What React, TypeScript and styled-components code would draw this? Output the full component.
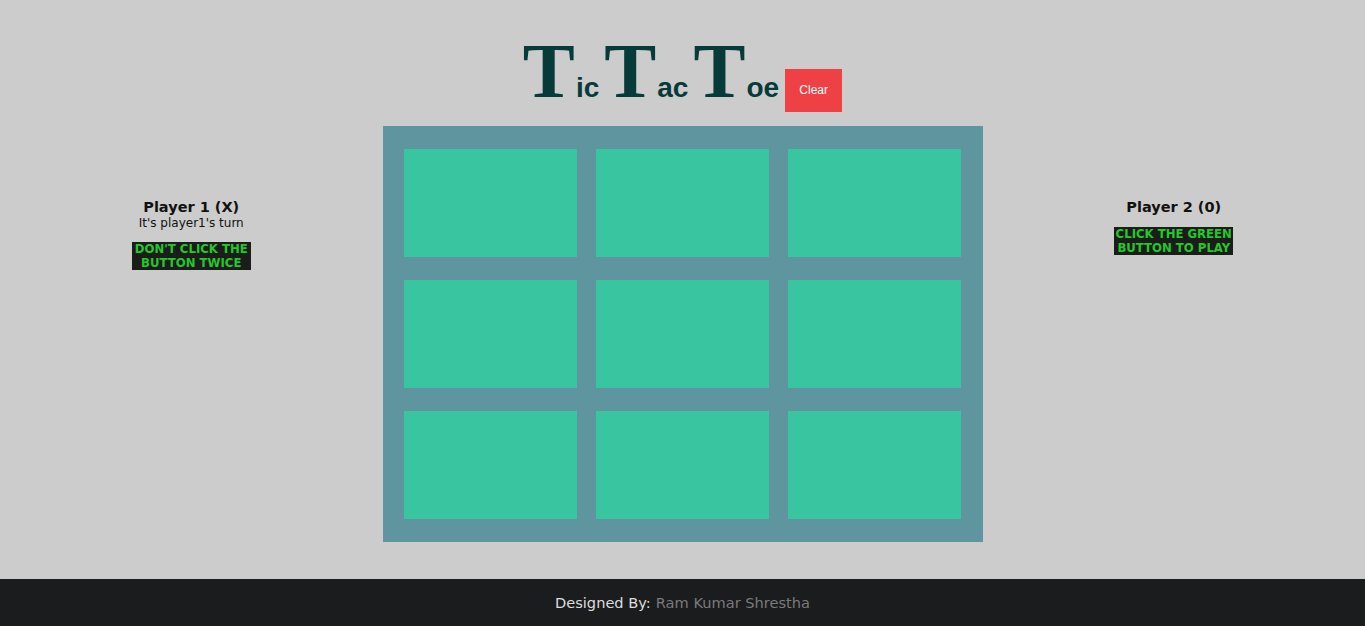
import React from "react";
import styled, { createGlobalStyle } from "styled-components";

const Global = createGlobalStyle`
  html, body { margin: 0; padding: 0; background: #cccccc; }
  body { font-family: "DejaVu Sans", Verdana, sans-serif; }
`;

const Page = styled.div`
  min-height: 626px;
  display: flex;
  flex-direction: column;
`;

const Header = styled.header`
  display: flex;
  justify-content: center;
  align-items: baseline;
  padding-top: 38px;
  height: 96px;
  box-sizing: border-box;
  color: #073b3a;
`;

const Big = styled.span`
  font-family: "Liberation Serif", "Times New Roman", serif;
  font-weight: 700;
  font-size: 78px;
  line-height: 66px;
`;

const Small = styled.span`
  font-family: "Liberation Sans", Arial, sans-serif;
  font-weight: 700;
  font-size: 28px;
  margin-right: 5px;
  margin-left: 1px;
`;

const ClearButton = styled.button`
  font-family: "Liberation Sans", Arial, sans-serif;
  font-size: 12px;
  color: #ffffff;
  background: #ef4045;
  border: none;
  padding: 14px 14px;
  line-height: 15px;
  margin-left: 1px;
  width: 57px;
  height: 43px;
  position: relative;
  top: -3px;
`;

const Main = styled.main`
  display: grid;
  grid-template-columns: 1fr 600px 1fr;
  align-items: start;
  margin-top: 30px;
  flex: 1;
`;

const PlayerCol = styled.div`
  display: flex;
  flex-direction: column;
  align-items: center;
  padding-top: 73px;
`;

const PlayerName = styled.div`
  font-weight: 700;
  font-size: 14.5px;
  color: #111;
  line-height: 16px;
`;

const Turn = styled.div`
  font-size: 12px;
  color: #111;
  line-height: 14px;
  margin-top: 1px;
`;

const Warning = styled.div<{ $top: number }>`
  margin-top: ${(p) => p.$top}px;
  width: 119px;
  background: #1b1d1b;
  color: #22c928;
  font-family: "DejaVu Sans Condensed", "DejaVu Sans", sans-serif;
  font-weight: 700;
  font-size: 13px;
  line-height: 14px;
  text-align: center;
  text-transform: uppercase;
`;

const Board = styled.div`
  background: #5f959e;
  padding: 23px 21px;
  display: grid;
  grid-template-columns: repeat(3, 1fr);
  grid-template-rows: repeat(3, 108px);
  column-gap: 19px;
  row-gap: 23px;
  height: 416px;
  box-sizing: border-box;
`;

const Cell = styled.button`
  background: #38c5a0;
  border: none;
  padding: 0;
  margin: 0;
`;

const Footer = styled.footer`
  background: #1b1c1e;
  height: 47px;
  display: flex;
  align-items: center;
  justify-content: center;
  font-size: 14.6px;
  color: #dddddd;
  margin-top: 37px;
`;

const Author = styled.span`
  color: #7a7a7a;
  margin-left: 5px;
`;

export default function App() {
  return (
    <Page>
      <Global />
      <Header>
        <Big>T</Big>
        <Small>ic</Small>
        <Big>T</Big>
        <Small>ac</Small>
        <Big>T</Big>
        <Small>oe</Small>
        <ClearButton>Clear</ClearButton>
      </Header>
      <Main>
        <PlayerCol>
          <PlayerName>Player 1 (X)</PlayerName>
          <Turn>It's player1's turn</Turn>
          <Warning $top={12}>Don't click the button twice</Warning>
        </PlayerCol>
        <Board>
          {Array.from({ length: 9 }).map((_, i) => (
            <Cell key={i} />
          ))}
        </Board>
        <PlayerCol>
          <PlayerName>Player 2 (0)</PlayerName>
          <Warning $top={12}>Click the green button to play</Warning>
        </PlayerCol>
      </Main>
      <Footer>
        Designed By:<Author>Ram Kumar Shrestha</Author>
      </Footer>
    </Page>
  );
}
